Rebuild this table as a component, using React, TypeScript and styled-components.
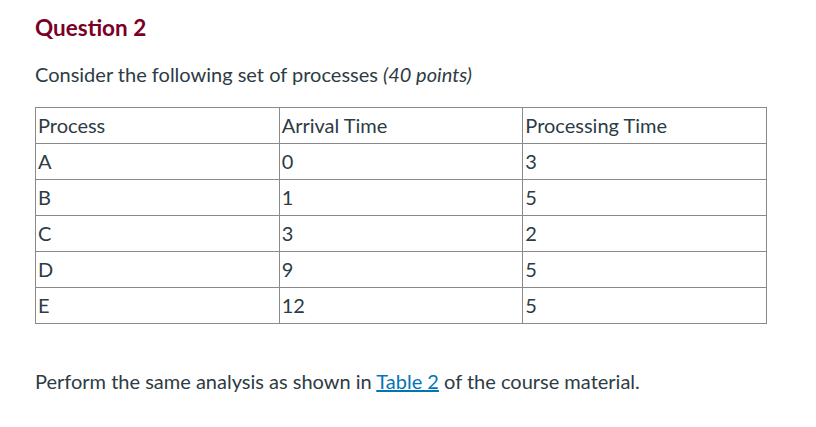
import React from 'react';
import styled, { createGlobalStyle } from 'styled-components';

const GlobalStyle = createGlobalStyle`
  body {
    margin: 0;
    background: #ffffff;
    font-family: Lato, "Open Sans", "Liberation Sans", sans-serif;
    color: #2d3b45;
  }
`;

const Page = styled.div`
  padding: 14px 49px 0 35px;
`;

const Heading = styled.h2`
  margin: 0 0 20px;
  font-size: 22.5px;
  font-weight: 700;
  line-height: 28px;
  color: #7a0026;
`;

const Para = styled.p<{ gap?: number }>`
  margin: ${({ gap }) => gap ?? 0}px 0 0;
  font-size: 20px;
  line-height: 24px;
`;

const Table = styled.table`
  margin-top: 21px;
  width: 732px;
  border-collapse: collapse;
  table-layout: fixed;
  font-size: 20px;
`;

const Cell = styled.td`
  border: 1px solid #8a8a8a;
  padding: 5px 2px 6px;
  line-height: 24px;
  vertical-align: middle;
`;

const Link = styled.a`
  color: #0374b5;
  text-decoration: underline;
`;

const rows: [string, string, string][] = [
  ['Process', 'Arrival Time', 'Processing Time'],
  ['A', '0', '3'],
  ['B', '1', '5'],
  ['C', '3', '2'],
  ['D', '9', '5'],
  ['E', '12', '5'],
];

const App = () => {
  return (
    <Page>
      <GlobalStyle />
      <Heading>Question 2</Heading>
      <Para>
        Consider the following set of processes <em>(40 points)</em>
      </Para>
      <Table>
        <tbody>
          {rows.map((r, i) => (
            <tr key={i}>
              {r.map((c, j) => (
                <Cell key={j}>{c}</Cell>
              ))}
            </tr>
          ))}
        </tbody>
      </Table>
      <Para gap={45}>
        Perform the same analysis as shown in <Link href="#">Table 2</Link> of the course material.
      </Para>
    </Page>
  );
};

export default App;
